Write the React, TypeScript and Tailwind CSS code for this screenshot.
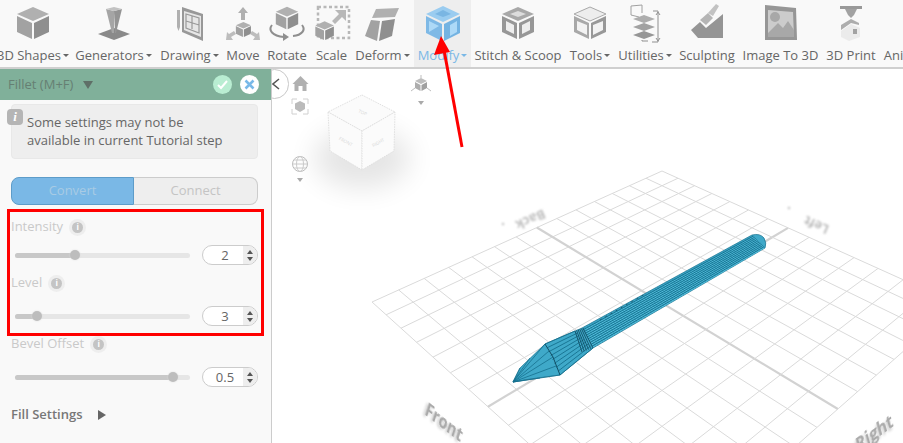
import type { ReactNode } from "react";

const Svg = ({ children }: { children: ReactNode }) => (
  <svg width="40" height="40" viewBox="0 0 40 40" className="shrink-0 blur-[0.3px]">
    {children}
  </svg>
);

function CubeFaces({ top = "#b0b0b0", left = "#a2a2a2", right = "#8f8f8f" }) {
  return (
    <>
      <polygon points="20,4 36,11 20,18 4,11" fill={top} />
      <polygon points="4,13 19,20 19,36 4,29" fill={left} />
      <polygon points="21,20 36,13 36,29 21,36" fill={right} />
    </>
  );
}

const ShapesIcon = () => (
  <Svg>
    <CubeFaces />
  </Svg>
);

const GeneratorsIcon = () => (
  <Svg>
    <polygon points="4,31 20,25 36,31 20,37" fill="#8a8a8a" />
    <polygon points="12,6 20,8 20,30 18,30" fill="#a5a5a5" />
    <polygon points="28,6 20,8 21,30 22,30" fill="#949494" />
    <polygon points="12,6 20,4 28,6 20,8" fill="#c2c2c2" />
  </Svg>
);

const DrawingIcon = () => (
  <Svg>
    <polygon points="12,4 33,11 33,38 12,29" fill="#989898" />
    <polygon points="14,8 31,13 31,34 14,27" fill="#e6e6e6" />
    <path d="M16 11l13 4v15l-13-5zM16 18l13 4M22 13v13" fill="none" stroke="#999999" strokeWidth="1.200" />
    <rect x="7" y="7" width="3" height="17" fill="#b0b0b0" />
    <polygon points="7,24 10,24 8.500,28" fill="#b0b0b0" />
  </Svg>
);

const MoveIcon = () => (
  <Svg>
    <g transform="translate(11 17) scale(.47)">
      <CubeFaces />
    </g>
    <path d="M20 4l-5 6h3v7h4v-7h3z" fill="#b0b0b0" />
    <path d="M3 37l1-8 2 2 5-3 2 3-5 3 2 3zM37 37l-1-8-2 2-5-3-2 3 5 3-2 3z" fill="#bdbdbd" />
  </Svg>
);

const RotateIcon = () => (
  <Svg>
    <g transform="translate(6 1) scale(.7)">
      <CubeFaces />
    </g>
    <path d="M5 22c-4 5 0 11 12 12M35 22c4 5 0 10-9 11" fill="none" stroke="#8f8f8f" strokeWidth="2" />
    <path d="M16 30l6 4-6 4z" fill="#8f8f8f" />
  </Svg>
);

const ScaleIcon = () => (
  <Svg>
    <rect x="6" y="4" width="31" height="31" fill="none" stroke="#b8b8b8" strokeWidth="2.500" strokeDasharray="3 2.500" />
    <g transform="translate(1 16) scale(.58)">
      <CubeFaces />
    </g>
    <path d="M34 7v11l-4-4-7 7-3-3 7-7-4-4z" fill="#b8b8b8" />
  </Svg>
);

const DeformIcon = () => (
  <Svg>
    <polygon points="13,6 36,5 32,14 9,15" fill="#b0b0b0" />
    <polygon points="8,17 17,18 14,38 2,33" fill="#a2a2a2" />
    <polygon points="19,18 32,16 29,33 16,38" fill="#8f8f8f" />
  </Svg>
);

const ModifyIcon = () => (
  <Svg>
    <polygon points="20,3 37,11 20,19 3,11" fill="#9accf0" />
    <polygon points="20,7 28,11 20,14 12,11" fill="#7ab6e3" />
    <polygon points="3,13 19,21 19,38 3,30" fill="#7eb9e6" />
    <polygon points="6,18 16,23 6,29" fill="#add9f7" />
    <polygon points="21,21 37,13 37,30 21,38" fill="#74b3e2" />
    <polygon points="27,22 34,18 34,29 27,33" fill="#add9f7" />
  </Svg>
);

const StitchIcon = () => (
  <Svg>
    <CubeFaces top="#a8a8a8" left="#979797" right="#979797" />
    <polygon points="20,8 28,11 20,14 12,11" fill="#dcdcdc" />
    <polygon points="8,18 16,22 16,31 8,27" fill="#eeeeee" />
    <polygon points="24,22 32,18 32,27 24,31" fill="#eeeeee" />
  </Svg>
);

const ToolsIcon = () => (
  <Svg>
    <polygon points="20,4 36,11 20,18 4,11" fill="#ededed" stroke="#a8a8a8" />
    <CubeFaces top="transparent" left="#a8a8a8" right="#989898" />
    <polygon points="7,18 17,22 17,32 7,27" fill="#f2f2f2" />
    <polygon points="23,22 33,18 33,27 23,32" fill="#f2f2f2" />
  </Svg>
);

const UtilitiesIcon = () => (
  <Svg>
    <path d="M14 14l-8-2V3l11-1v8" fill="none" stroke="#a0a0a0" />
    <polygon points="19,12 30,16 19,20 8,16" fill="#adadad" />
    <polygon points="19,20 30,24 19,28 8,24" fill="#a2a2a2" />
    <polygon points="19,28 30,32 19,36 8,32" fill="#969696" />
    <path d="M28 8h5v31h-6M17 37v1h6M33 9l-2 3M33 9l2 3M33 38l-2-3M33 38l2-3" fill="none" stroke="#8f8f8f" />
  </Svg>
);

const SculptIcon = () => (
  <Svg>
    <polygon points="4,27 13,19 19,25 36,11 36,35 11,35" fill="#959595" />
    <polygon points="13,17 21,10 26,15 19,22" fill="#b5b5b5" />
    <polygon points="21,10 29,1 32,3 26,13" fill="#c2c2c2" />
  </Svg>
);

const ImageIcon = () => (
  <Svg>
    <polygon points="4,2 35,5 36,37 4,37" fill="#969696" />
    <polygon points="7,7 32,9 33,34 7,34" fill="#cccccc" />
    <circle cx="14" cy="14" r="5" fill="#a8a8a8" />
    <polygon points="7,30 17,20 22,25 27,18 33,27 33,34 7,34" fill="#a8a8a8" />
  </Svg>
);

const PrintIcon = () => (
  <Svg>
    <rect x="9" y="3" width="22" height="3" fill="#999999" />
    <polygon points="14,6 26,6 23,12 20,15 17,12" fill="#a2a2a2" />
    <polygon points="10,22 20,16 28,20 28,22 20,20 10,27" fill="#adadad" />
    <polygon points="10,28 20,21 29,25 29,34 18,38 10,34" fill="#ebebeb" />
    <rect x="22" y="26" width="4" height="5" fill="#a2a2a2" />
  </Svg>
);

const AnimationIcon = () => (
  <Svg>
    <path d="M9 26v10h6" fill="none" stroke="#a0a0a0" strokeWidth="1.500" />
    <ellipse cx="13" cy="26" rx="4" ry="2" fill="none" stroke="#a0a0a0" />
  </Svg>
);

const TOOLS = [
  { label: "3D Shapes", w: "w-[78px]", caret: true, icon: <ShapesIcon /> },
  { label: "Generators", w: "w-[83px]", caret: true, icon: <GeneratorsIcon /> },
  { label: "Drawing", w: "w-[69px]", caret: true, icon: <DrawingIcon /> },
  { label: "Move", w: "w-[38px]", icon: <MoveIcon /> },
  { label: "Rotate", w: "w-[50px]", icon: <RotateIcon /> },
  { label: "Scale", w: "w-[39px]", icon: <ScaleIcon /> },
  { label: "Deform", w: "w-[63px]", caret: true, icon: <DeformIcon /> },
  { label: "Modify", w: "w-[57px]", caret: true, active: true, icon: <ModifyIcon /> },
  { label: "Stitch & Scoop", w: "w-[94px]", icon: <StitchIcon /> },
  { label: "Tools", w: "w-[50px]", caret: true, icon: <ToolsIcon /> },
  { label: "Utilities", w: "w-[60px]", caret: true, icon: <UtilitiesIcon /> },
  { label: "Sculpting", w: "w-[64px]", icon: <SculptIcon /> },
  { label: "Image To 3D", w: "w-[83px]", icon: <ImageIcon /> },
  { label: "3D Print", w: "w-[58px]", icon: <PrintIcon /> },
  { label: "Animation", w: "w-[70px]", icon: <AnimationIcon /> },
];

function Toolbar() {
  return (
    <div className="flex h-[69px] shrink-0 border-b-2 border-[#cfcfcf] bg-[#f9f9f9] -ml-[6px] w-[920px]">
      {TOOLS.map((t) => (
        <div
          key={t.label}
          className={`${t.w} shrink-0 flex flex-col items-center pt-[3px] ${t.active ? "bg-[#eeeeee] text-[#7ab8e6]" : "text-[#666666]"}`}
        >
          {t.icon}
          <div className="mt-[3px] flex items-center text-[13px] leading-[18px] whitespace-nowrap">
            {t.label}
            {t.caret && (
              <span className={`ml-[2px] mt-[1px] border-x-[3px] border-t-[3px] border-x-transparent ${t.active ? "border-t-[#7ab8e6]" : "border-t-[#666666]"}`} />
            )}
          </div>
        </div>
      ))}
    </div>
  );
}

function InfoDot() {
  return (
    <span className="ml-[6px] flex h-[17px] w-[17px] items-center justify-center rounded-full bg-[#eeeeee]">
      <span className="flex h-[11px] w-[11px] items-center justify-center rounded-full bg-[#c4c4c4] text-[8px] font-bold text-white">i</span>
    </span>
  );
}

function Spinner({ value }: { value: string }) {
  return (
    <div className="ml-[12px] flex h-[20px] w-[56px] overflow-hidden rounded-full border border-[#cccccc] bg-white">
      <div className="flex-1 pl-[4px] text-center text-[13px] leading-[19px] text-[#666666]">{value}</div>
      <div className="flex w-[14px] flex-col items-center justify-center gap-[3px] bg-[#eeeeee]">
        <span className="border-x-[3px] border-b-[4px] border-x-transparent border-b-[#555555]" />
        <span className="border-x-[3px] border-t-[4px] border-x-transparent border-t-[#555555]" />
      </div>
    </div>
  );
}

function SliderRow({ label, value, pct, rowGap, labelGap }: { label: string; value: string; pct: number; rowGap: string; labelGap: string }) {
  return (
    <>
      <div className={`${labelGap} ml-[11px] flex h-[20px] items-center text-[13px] text-[#c9c9c9]`}>
        {label}
        <InfoDot />
      </div>
      <div className={`${rowGap} ml-[15px] flex h-[20px] items-center`}>
        <div className="flex h-[5px] w-[175px] items-center rounded-full bg-[#e6e6e6]">
          <div className="h-full rounded-l-full bg-[#c8c8c8]" style={{ width: `${pct}%` }} />
          <div className="-ml-[5px] h-[10px] w-[10px] rounded-full bg-[#bdbdbd] shadow-[0_0_2px_#dddddd]" />
        </div>
        <Spinner value={value} />
      </div>
    </>
  );
}

function Panel() {
  return (
    <div className="h-full w-[272px] shrink-0 border-r border-[#cccccc] bg-[#f9f9f9]">
      <div className="flex h-[31px] items-center bg-[#80b09a] pl-[8px] text-[13px] text-[#667f73]">
        Fillet (M+F)
        <span className="ml-[10px] border-x-[5px] border-t-[8px] border-x-transparent border-t-[#5f6f67]" />
        <span className="ml-auto flex h-[19px] w-[19px] items-center justify-center rounded-full bg-[#b9edd2]">
          <svg width="13" height="13" viewBox="0 0 13 13">
            <path d="M2 7l3 3 6-7" fill="none" stroke="#fff" strokeWidth="2" />
          </svg>
        </span>
        <span className="ml-[8px] mr-[12px] flex h-[19px] w-[19px] items-center justify-center rounded-full bg-white">
          <svg width="13" height="13" viewBox="0 0 13 13">
            <path d="M2.500 2.500l8 8M10.500 2.500l-8 8" fill="none" stroke="#79b9e8" strokeWidth="2.500" />
          </svg>
        </span>
      </div>
      <div className="relative mx-[11px] mt-[4px] h-[55px] w-[247px] rounded-[4px] border border-[#e8e8e8] bg-[#eeeeee] pl-[15px] pt-[8px] text-[13px] leading-[18px] text-[#666666]">
        Some settings may not be
        <br />
        available in current Tutorial step
        <span className="absolute -left-[5px] top-[4px] flex h-[16px] w-[16px] items-center justify-center rounded-[4px] bg-[#b5b5b5] font-['Liberation_Serif',serif] text-[13px] font-bold italic text-white">i</span>
      </div>
      <div className="mx-[11px] mt-[18px] flex h-[28px] w-[247px] text-[13px]">
        <div className="flex w-[123px] items-center justify-center rounded-l-[8px] border border-[#5d9cc9] bg-[#7ab8e6] text-[#a8cbe4]">Convert</div>
        <div className="flex flex-1 items-center justify-center rounded-r-[8px] border border-l-0 border-[#cccccc] bg-[#eeeeee] text-[#c4c4c4]">Connect</div>
      </div>
      <SliderRow label="Intensity" value="2" pct={34.500} labelGap="mt-[12px]" rowGap="mt-[8px]" />
      <SliderRow label="Level" value="3" pct={12.500} labelGap="mt-[8px]" rowGap="mt-[13px]" />
      <SliderRow label="Bevel Offset" value="0.5" pct={90} labelGap="mt-[8px]" rowGap="mt-[13px]" />
      <div className="ml-[11px] mt-[18px] flex h-[20px] items-center text-[13px] font-semibold text-[#777777]">
        Fill Settings
        <span className="ml-[15px] border-y-[5px] border-l-[8px] border-y-transparent border-l-[#666666]" />
      </div>
    </div>
  );
}

// square -> quad homography for the print bed
const A = [372, 302];
const B = [662, 171];
const C = [957, 304];
const D = [662, 564];

function project(u: number, v: number): [number, number] {
  const dx1 = B[0] - C[0];
  const dx2 = D[0] - C[0];
  const sx = A[0] - B[0] + C[0] - D[0];
  const dy1 = B[1] - C[1];
  const dy2 = D[1] - C[1];
  const sy = A[1] - B[1] + C[1] - D[1];
  const det = dx1 * dy2 - dx2 * dy1;
  const g = (sx * dy2 - dx2 * sy) / det;
  const h = (dx1 * sy - sx * dy1) / det;
  const a = B[0] - A[0] + g * B[0];
  const b = D[0] - A[0] + h * D[0];
  const d = B[1] - A[1] + g * B[1];
  const e = D[1] - A[1] + h * D[1];
  const w = g * u + h * v + 1;
  return [(a * u + b * v + A[0]) / w, (d * u + e * v + A[1]) / w];
}

function BedGrid() {
  const n = 14;
  const lines = [];
  for (let i = 0; i <= n; i++) {
    const t = i / n;
    const mid = i === n / 2;
    const col = mid ? "#d2d2d2" : "#dadada";
    const sw = mid ? 2.2 : 1;
    const p = [project(t, 0), project(t, 1), project(0, t), project(1, t)];
    lines.push(<line key={`a${i}`} x1={p[0][0]} y1={p[0][1]} x2={p[1][0]} y2={p[1][1]} stroke={col} strokeWidth={sw} />);
    lines.push(<line key={`b${i}`} x1={p[2][0]} y1={p[2][1]} x2={p[3][0]} y2={p[3][1]} stroke={col} strokeWidth={sw} />);
  }
  return <g>{lines}</g>;
}

function Pen() {
  const stripes = [];
  const n = 11;
  for (let i = 1; i < n; i++) {
    const t = i / n;
    const x1 = 582 + 11 * t;
    const y1 = 328 + 20 * t;
    const x2 = 752 + 13 * t;
    const y2 = 235 + 13 * t;
    stripes.push(<line key={`d${i}`} x1={x1} y1={y1} x2={x2} y2={y2} stroke="#15708e" strokeWidth=".9" />);
    stripes.push(<line key={`l${i}`} x1={x1 + 0.6} y1={y1 + 1} x2={x2 + 0.6} y2={y2 + 1} stroke="#62cbe6" strokeWidth=".7" />);
  }
  // fine cross mesh along the barrel
  const mesh = [];
  for (let i = 0; i <= 70; i++) {
    const t = i / 70;
    const x = 582 + 170 * t;
    const y = 328 - 93 * t;
    mesh.push(<line key={`m${i}`} x1={x} y1={y} x2={x + 11 + 2 * t} y2={y + 20 - 7 * t} stroke="#15708e" strokeWidth=".5" opacity=".6" />);
  }
  const cone = [];
  const rim: [number, number][] = [[520, 368], [530, 358], [545, 344], [549, 351], [553, 357], [556, 366], [560, 375], [540, 378]];
  rim.forEach(([x, y], i) => cone.push(<line key={`c${i}`} x1={513} y1={382} x2={x} y2={y} stroke="#15708e" strokeWidth=".8" />));
  const flare = [];
  for (let i = 0; i <= 8; i++) {
    const t = i / 8;
    flare.push(
      <line key={`f${i}`} x1={545 + 15 * t} y1={344 + 31 * t} x2={575 + 18 * t} y2={331 + 17 * t} stroke="#15708e" strokeWidth=".9" />
    );
  }
  const rings = [];
  for (let i = 0; i <= 5; i++) {
    const t = i / 5;
    rings.push(
      <line key={`r${i}`} x1={575 + 8 * t} y1={331 - 3 * t} x2={582 + 11 * t} y2={352 - 4 * t} stroke="#124f66" strokeWidth=".9" />
    );
  }
  return (
    <g className="blur-[0.3px]">
      <path d="M513 382L520 368L545 344L582 328L752 235Q760 233 764 238Q767 243 765 248L593 348L560 375L530 379Z" fill="#3fa9c9" stroke="#15708e" strokeWidth=".7" />
      {stripes}
      {mesh}
      {cone}
      {flare}
      {rings}
      <path d="M545 344l8 13 7 18" fill="none" stroke="#124f66" strokeWidth="1" />
      <path d="M600 320l45-26" stroke="#124f66" strokeWidth=".8" strokeDasharray="2 4" fill="none" />
    </g>
  );
}

function ViewCube() {
  return (
    <g>
      <ellipse cx="362" cy="158" rx="48" ry="30" fill="#000000" opacity=".1" className="blur-[14px]" />
      <g fill="#fbfbfb" stroke="#e0e0e0" strokeDasharray="1.500 1">
        <polygon points="362,95 395,112 362,131 328,112" />
        <polygon points="328,112 362,131 362,170 330,151" />
        <polygon points="395,112 362,131 362,170 394,151" />
      </g>
      <g fill="#d8d8d8" fontSize="4.500" fontFamily="'Open Sans', sans-serif" textAnchor="middle">
        <text transform="translate(362 114) rotate(25)">TOP</text>
        <text transform="translate(345 143) rotate(28)">FRONT</text>
        <text transform="translate(379 144) rotate(-30)">RIGHT</text>
      </g>
    </g>
  );
}

function ViewIcons() {
  return (
    <g>
      <path d="M300.500 76l-8 8h2v7h4v-5h4v5h4v-7h2z" fill="#b0b0b0" />
      <path d="M292 104v-5h5M303 99h5v5M308 109v5h-5M297 114h-5v-5" fill="none" stroke="#d0d0d0" />
      <polygon points="300,101 305,103.500 305,109 300,112 295,109 295,103.500" fill="#bbbbbb" />
      <circle cx="300" cy="164" r="7.500" fill="none" stroke="#bcbcbc" />
      <ellipse cx="300" cy="164" rx="3.500" ry="7.500" fill="none" stroke="#cacaca" />
      <path d="M292.500 164h15M294 160h12M294 168h12" stroke="#cacaca" />
      <polygon points="297,178 303,178 300,182" fill="#aaaaaa" />
      <polygon points="421,78 427,81 421,84 415,81" fill="#bdbdbd" />
      <polygon points="415,82 420.500,85 420.500,91 415,88" fill="#adadad" />
      <polygon points="427,82 421.500,85 421.500,91 427,88" fill="#a0a0a0" />
      <path d="M421 75v3M415 88l-4 3M427 88l4 3" stroke="#bdbdbd" />
      <polygon points="418,101 424,101 421,105" fill="#aaaaaa" />
    </g>
  );
}

function BedLabel({ x, y, rotate, skew, children }: { x: number; y: number; rotate: number; skew: number; children: string }) {
  return (
    <text
      transform={`translate(${x} ${y}) rotate(${rotate}) skewX(${skew})`}
      fontFamily="'Open Sans', sans-serif"
      fontWeight="700"
      fontSize="17"
      fill="#aaaaaa"
      className="blur-[0.6px] [text-shadow:-2px_2px_3px_#d0d0d0]"
    >
      {children}
    </text>
  );
}

function Viewport() {
  return (
    <div className="relative h-full flex-1 overflow-hidden bg-white">
      <svg className="absolute inset-0" width="631" height="374" viewBox="272 69 631 374">
        <BedGrid />
        <ViewCube />
        <ViewIcons />
        <Pen />
        <BedLabel x={424} y={414} rotate={38} skew={20}>Front</BedLabel>
        <BedLabel x={858} y={452} rotate={-36} skew={-20}>Right</BedLabel>
        <g className="blur-[1px]" fill="#bdbdbd" fontFamily="'Open Sans', sans-serif" fontWeight="700" fontSize="13">
          <text transform="translate(543 209) rotate(156)">Back</text>
          <text transform="translate(830 226) rotate(-156)">Left</text>
          <circle cx="503" cy="224" r="1.200" />
          <circle cx="789" cy="208" r="1.200" />
        </g>
      </svg>
      <div className="absolute -left-[12px] top-0 flex h-[30px] w-[29px] items-center justify-end rounded-full border border-[#c8c8c8] bg-white pr-[8px]">
        <svg width="8" height="12" viewBox="0 0 8 12">
          <path d="M7 1L1 6l6 5" fill="none" stroke="#555555" strokeWidth="1.500" />
        </svg>
      </div>
    </div>
  );
}

export default function App() {
  return (
    <div className="relative flex h-[443px] w-[903px] flex-col overflow-hidden bg-white font-['Open_Sans',sans-serif]">
      <Toolbar />
      <div className="flex min-h-0 flex-1">
        <Panel />
        <Viewport />
      </div>
      {/* tutorial annotations drawn over the app */}
      <div className="absolute left-[7px] top-[209px] h-[127px] w-[257px] border-[3px] border-[#ff0000]" />
      <svg className="absolute inset-0" width="903" height="443" viewBox="0 0 903 443">
        <line x1="462" y1="147" x2="444" y2="50" stroke="#ff0000" strokeWidth="3" />
        <polygon points="441,36 434,55 450,52" fill="#ff0000" />
      </svg>
    </div>
  );
}
